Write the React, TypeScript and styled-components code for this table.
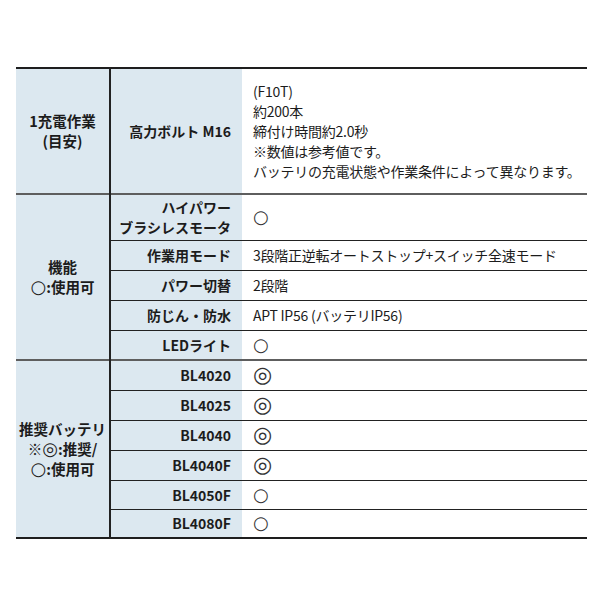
import React from "react";
import styled, { createGlobalStyle } from "styled-components";

const GlobalStyle = createGlobalStyle`
  html, body {
    margin: 0;
    padding: 0;
    background: #ffffff;
  }
  body {
    font-family: "Noto Sans CJK JP", "Noto Sans", sans-serif;
    color: #1c1c1c;
  }
`;

const Page = styled.div`
  padding: 67px 13px 0 16px;
`;

const Table = styled.table`
  width: 571px;
  border-collapse: collapse;
  table-layout: fixed;
  border-top: 2px solid #1e1e1e;
  border-bottom: 2px solid #1e1e1e;
  font-size: 14px;
  line-height: 20px;
`;

const Col = styled.col<{ $w: number }>`
  width: ${(p) => p.$w}px;
`;

const Row = styled.tr<{ $h: number }>`
  height: ${(p) => p.$h}px;
`;

const GroupCell = styled.th<{ $first?: boolean }>`
  padding: 0 2px;
  background: #dce8f0;
  border-right: 2px solid #222;
  border-top: ${(p) => (p.$first ? "none" : "2px solid #5e5e5e")};
  font-weight: 700;
  font-size: 14.5px;
  text-align: center;
  vertical-align: middle;
  white-space: nowrap;
`;

const LabelCell = styled.th<{ $sep: "none" | "line" | "group" }>`
  padding: 0 11px 0 2px;
  background: #dce8f0;
  font-weight: 700;
  text-align: right;
  vertical-align: middle;
  white-space: nowrap;
  border-top: ${(p) =>
    p.$sep === "group"
      ? "2px solid #5e5e5e"
      : p.$sep === "line"
      ? "1px solid #222"
      : "none"};
`;

const ValueCell = styled.td<{ $sep: "none" | "line" | "group" }>`
  padding: 0 0 0 11px;
  background: #ffffff;
  font-weight: 400;
  text-align: left;
  vertical-align: middle;
  white-space: nowrap;
  letter-spacing: -0.25px;
  border-top: ${(p) =>
    p.$sep === "group"
      ? "2px solid #5e5e5e"
      : p.$sep === "line"
      ? "1px solid #222"
      : "none"};
`;

const Lines = styled.div`
  padding: 12px 0;
`;

const Mark = styled.span<{ $double?: boolean; $small?: boolean }>`
  display: inline-block;
  height: 20px;
  vertical-align: top;
  font-family: "DejaVu Sans", sans-serif;
  font-weight: ${(p) => (p.$small ? 700 : 400)};
  font-size: ${(p) => (p.$small ? 18 : p.$double ? 22 : 18)}px;
  line-height: 20px;
  color: ${(p) => (p.$small ? "#1c1c1c" : "#333")};
`;

type Sep = "none" | "line" | "group";

type Item = { label: React.ReactNode; value: React.ReactNode; h: number };

type Group = { title: React.ReactNode; items: Item[] };

const circle = <Mark>○</Mark>;
const double = <Mark $double>◎</Mark>;

const groups: Group[] = [
  {
    title: (
      <>
        1充電作業
        <br />
        (目安)
      </>
    ),
    items: [
      {
        label: "高力ボルト M16",
        value: (
          <Lines>
            (F10T)
            <br />
            約200本
            <br />
            締付け時間約2.0秒
            <br />
            ※数値は参考値です。
            <br />
            バッテリの充電状態や作業条件によって異なります。
          </Lines>
        ),
        h: 125,
      },
    ],
  },
  {
    title: (
      <>
        機能
        <br />
        <Mark $small>○</Mark>:使用可
      </>
    ),
    items: [
      {
        label: (
          <>
            ハイパワー
            <br />
            ブラシレスモータ
          </>
        ),
        value: circle,
        h: 46,
      },
      { label: "作業用モード", value: "3段階正逆転オートストップ+スイッチ全速モード", h: 30 },
      { label: "パワー切替", value: "2段階", h: 30 },
      { label: "防じん・防水", value: "APT IP56 (バッテリIP56)", h: 30 },
      { label: "LEDライト", value: circle, h: 30 },
    ],
  },
  {
    title: (
      <>
        推奨バッテリ
        <br />
        ※<Mark $small>◎</Mark>:推奨/
        <br />
        <Mark $small>○</Mark>:使用可
      </>
    ),
    items: [
      { label: "BL4020", value: double, h: 30 },
      { label: "BL4025", value: double, h: 30 },
      { label: "BL4040", value: double, h: 30 },
      { label: "BL4040F", value: double, h: 30 },
      { label: "BL4050F", value: circle, h: 29 },
      { label: "BL4080F", value: circle, h: 29 },
    ],
  },
];

const App = () => {
  return (
    <Page>
      <GlobalStyle />
      <Table>
        <colgroup>
          <Col $w={94} />
          <Col $w={132} />
          <Col $w={345} />
        </colgroup>
        <tbody>
          {groups.map((g, gi) =>
            g.items.map((it, ii) => {
              const sep: Sep = ii > 0 ? "line" : gi > 0 ? "group" : "none";
              return (
                <Row key={`${gi}-${ii}`} $h={it.h}>
                  {ii === 0 && (
                    <GroupCell rowSpan={g.items.length} $first={gi === 0}>
                      {g.title}
                    </GroupCell>
                  )}
                  <LabelCell $sep={sep}>{it.label}</LabelCell>
                  <ValueCell $sep={sep}>{it.value}</ValueCell>
                </Row>
              );
            })
          )}
        </tbody>
      </Table>
    </Page>
  );
};

export default App;
